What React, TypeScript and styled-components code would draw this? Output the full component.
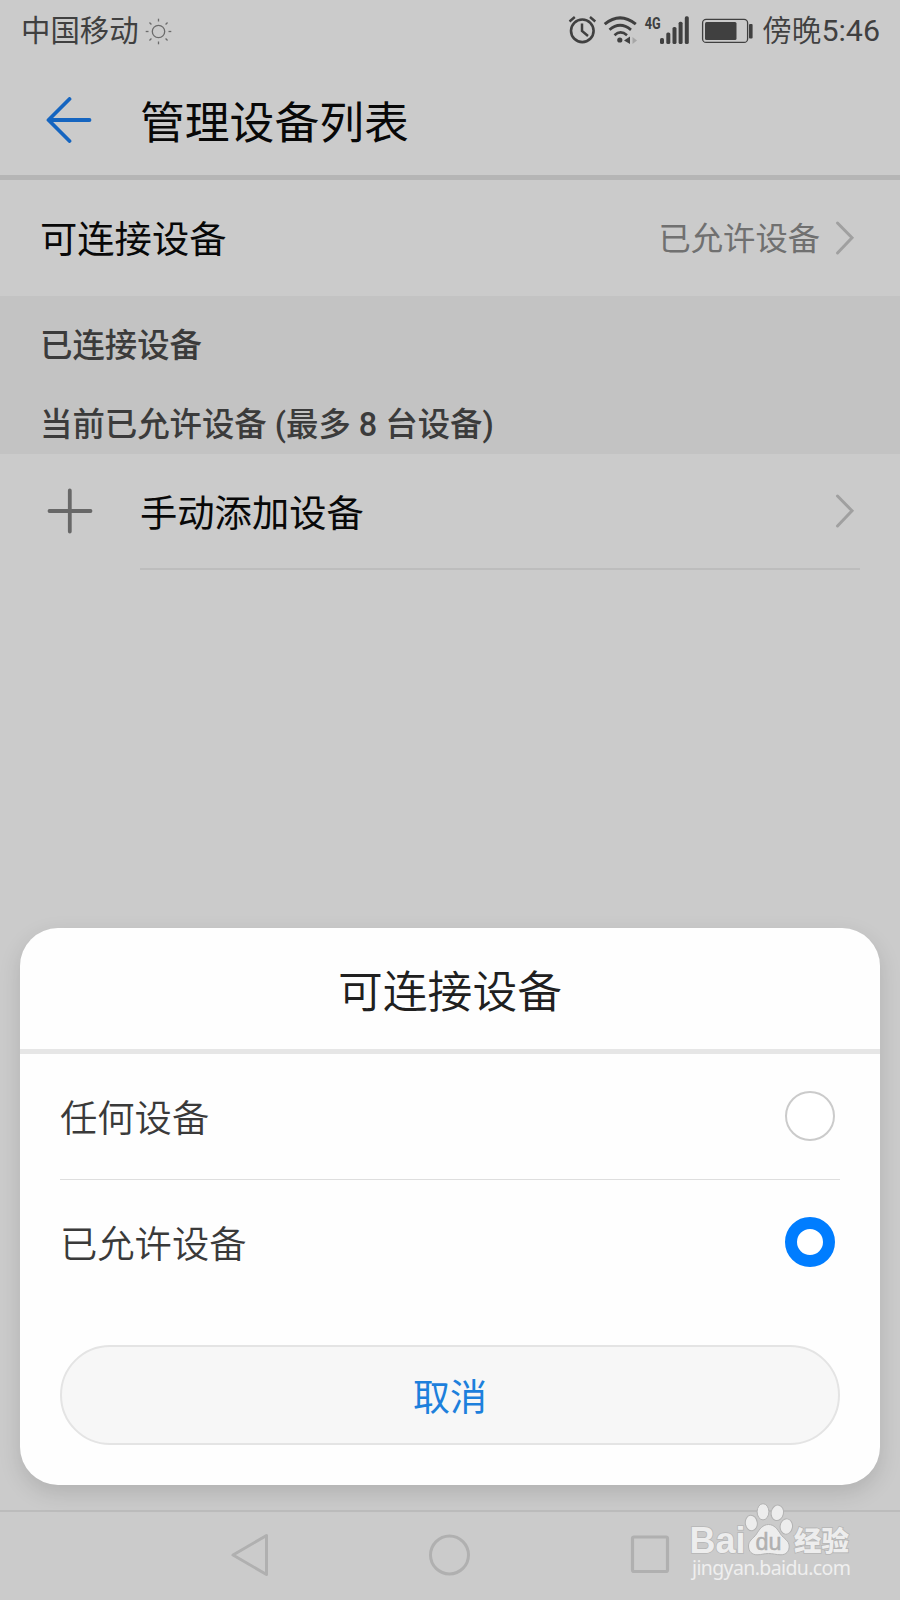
import React, { useState } from "react";
import styled, { createGlobalStyle } from "styled-components";

const GlobalStyle = createGlobalStyle`
  * { box-sizing: border-box; }
  body {
    margin: 0;
    background: #cbcbcb;
    font-family: Roboto, "Noto Sans CJK SC", sans-serif;
  }
  button { font-family: inherit; }
`;

const Screen = styled.div`
  position: relative;
  display: flex;
  flex-direction: column;
  width: 900px;
  height: 1600px;
  overflow: hidden;
  background: #cbcbcb;
  color: #080808;
`;

const StatusBar = styled.div`
  display: flex;
  align-items: center;
  justify-content: space-between;
  height: 62px;
  padding: 0 20px 0 21px;
  color: #404040;
  font-size: 29.4px;
  line-height: 62px;
`;

const StatusGroup = styled.div<{ $gap: number }>`
  display: flex;
  align-items: center;
  gap: ${(p) => p.$gap}px;
`;

const StatusIcon = styled.svg`
  display: block;
  flex: none;
`;

const Clock = styled.span`
  display: flex;
  font-size: 30.4px;
  font-weight: 400;
`;

const ClockPeriod = styled.span`
  font-size: 29.6px;
  font-weight: 350;
`;

const AppBar = styled.header`
  display: flex;
  align-items: center;
  height: 118px;
  padding: 2px 41px 0 46px;
  border-bottom: 5px solid #b5b5b5;
`;

const IconSlot = styled.span<{ $width: number }>`
  display: flex;
  flex: none;
  width: ${(p) => p.$width}px;
`;

const AppTitle = styled.h1`
  margin: 9px 0 0;
  font-size: 44.8px;
  font-weight: 400;
  line-height: 60px;
`;

const ListRow = styled.div<{ $height: number; $labelTop: number }>`
  display: flex;
  align-items: center;
  height: ${(p) => p.$height}px;
  padding: 0 45px 1px 40px;

  > span:not(:first-child),
  > span:only-of-type {
    padding-top: ${(p) => p.$labelTop}px;
  }
`;

const RowLabel = styled.span`
  flex: 1;
  padding-top: 4px;
  font-size: 37.3px;
  line-height: 50px;
`;

const RowValue = styled.span`
  margin-right: 15px;
  color: #707070;
  font-size: 32.3px;
  line-height: 50px;
`;

const Section = styled.div`
  display: flex;
  flex-direction: column;
  height: 158px;
  padding: 3px 0 0 40px;
  background: #c3c3c3;
`;

const SectionTitle = styled.h2<{ $height: number }>`
  margin: 0;
  height: ${(p) => p.$height}px;
  color: #3b3b3b;
  font-size: 32.4px;
  font-weight: 500;
  line-height: ${(p) => p.$height}px;
  white-space: pre;
`;

const InsetLine = styled.div`
  height: 2px;
  margin: 0 40px 0 140px;
  background: #bdbdbd;
`;

const NavBar = styled.nav`
  display: flex;
  align-items: center;
  gap: 159px;
  height: 90px;
  margin-top: auto;
  padding: 0 0 2px 230px;
  border-top: 2px solid #bcbcbc;
`;

const Sheet = styled.section`
  position: absolute;
  top: 928px;
  left: 20px;
  width: 860px;
  height: 557px;
  border-radius: 38px;
  background: #fefefe;
  box-shadow: 0 8px 22px rgba(0, 0, 0, 0.13);
`;

const SheetTitle = styled.h2`
  height: 126px;
  margin: 0;
  padding-top: 3px;
  border-bottom: 5px solid #e6e6e6;
  color: #202020;
  font-size: 44.8px;
  font-weight: 350;
  line-height: 124px;
  text-align: center;
`;

const Options = styled.div`
  display: flex;
  flex-direction: column;
  margin: 0 40px;
`;

const Option = styled.div<{ $divided: boolean }>`
  display: flex;
  align-items: center;
  justify-content: space-between;
  height: 126px;
  padding: 0 5px 2px 0;
  border-bottom: ${(p) => (p.$divided ? "1px solid #dedede" : "0")};
  color: #3a3a3a;
  font-size: 37.3px;
  font-weight: 350;
  cursor: pointer;
`;

const Radio = styled.span<{ $checked: boolean }>`
  width: 50px;
  height: 50px;
  border: ${(p) => (p.$checked ? "12.5px solid #007dff" : "2px solid #cbcbcb")};
  border-radius: 50%;
  background: #fff;
`;

const CancelButton = styled.button`
  display: block;
  width: 780px;
  height: 100px;
  margin: 39px 40px 0;
  padding: 0 0 1px;
  border: 2px solid #e4e4e4;
  border-radius: 50px;
  background: #f7f7f7;
  color: #1d80dc;
  font-size: 37px;
`;

const Watermark = styled.div`
  position: absolute;
  top: 1500px;
  left: 688px;
  width: 168px;
  height: 88px;
`;

const Chevron = () => (
  <svg width="20" height="36" viewBox="0 0 20 36" fill="none" stroke="#a0a0a0" strokeWidth="3">
    <path d="M2.500 3 17 17.800 2.500 33" strokeLinecap="round" />
  </svg>
);

const SunIcon = () => (
  <StatusIcon width="27" height="27" viewBox="-13.5 -13.5 27 27" fill="none" stroke="#6b6b6b" strokeWidth="1.3">
    <circle r="6.2" />
    {[0, 45, 90, 135, 180, 225, 270, 315].map((a) => (
      <path key={a} d="M10 0H12.800" transform={`rotate(${a})`} />
    ))}
  </StatusIcon>
);

const SystemIcons = () => (
  <StatusIcon width="193" height="62" viewBox="565 0 193 62" fill="none" stroke="#404040">
    <circle cx="582.3" cy="30.8" r="11.3" strokeWidth="2.6" />
    <path d="M582 23.500V31L588 36" strokeWidth="2.5" />
    <path d="M569.500 21.500 574.800 17M595.300 21.500 590 17" strokeWidth="2.4" />
    <path d="M604.700 24.200Q620 11.500 635.800 24.200" strokeWidth="3" />
    <path d="M609.500 29.800Q620 20.800 631 29.800" strokeWidth="2.8" />
    <path d="M614.500 35.200Q620.500 29.600 627 35.200" strokeWidth="2.6" />
    <circle cx="619.8" cy="40" r="2.6" fill="#404040" stroke="none" />
    <path d="M630 36.500V44L624 40.500Z" fill="#404040" stroke="none" />
    <path d="M632.500 37V44L637 40.500Z" fill="#a7a7a7" stroke="none" />
    <text x="644.8" y="28.500" fill="#404040" stroke="none" fontFamily="Roboto" fontWeight="700" fontSize="16.500" textLength="16" lengthAdjust="spacingAndGlyphs">4G</text>
    <g fill="#404040" stroke="none">
      <rect x="660" y="38" width="4" height="6" rx="1.6" />
      <rect x="666.3" y="32.5" width="4" height="11.5" rx="1.6" />
      <rect x="672.5" y="27" width="4" height="17" rx="1.6" />
      <rect x="678.6" y="21.7" width="4" height="22.3" rx="1.6" />
      <rect x="684.8" y="16.3" width="4" height="27.7" rx="1.6" />
      <rect x="705" y="22" width="31.5" height="18" rx="1.5" />
      <rect x="749" y="24" width="3.6" height="14.5" rx="1" />
    </g>
    <rect x="702.6" y="19.4" width="45" height="23" rx="3.5" strokeWidth="1.3" />
  </StatusIcon>
);

const BaiduMark = () => (
  <svg width="168" height="88" viewBox="688 1500 168 88">
    <g fill="#ededed" stroke="#b3b3b3" strokeWidth="1">
      <ellipse cx="751.3" cy="1523" rx="6" ry="7.800" transform="rotate(-8 751.3 1523)" />
      <ellipse cx="763" cy="1511.8" rx="5.9" ry="8.1" />
      <ellipse cx="777.3" cy="1512.8" rx="6.2" ry="7.8" transform="rotate(12 777.3 1512.8)" />
      <ellipse cx="786.3" cy="1526.5" rx="6.2" ry="7.7" transform="rotate(8 786.3 1526.5)" />
      <path d="M768.500 1524.500C763 1524.500 759.500 1529 756.500 1534C753 1539 748.500 1540.500 748.500 1546C748.500 1551.500 752 1554.800 757 1554.800C762 1554.800 764 1553.500 768.500 1553.500C773 1553.500 776 1554.800 781 1554.800C786 1554.800 789.300 1551.500 789.200 1546C789 1540.500 784 1539 780.500 1534C777.500 1529 774 1524.500 768.500 1524.500Z" />
    </g>
    <g fill="#ededed" stroke="#b6b6b6" strokeWidth="1.6" paintOrder="stroke">
      <text x="689.500" y="1552.700" fontFamily="'Liberation Sans', sans-serif" fontWeight="700" fontSize="36.500" textLength="56" lengthAdjust="spacingAndGlyphs">Bai</text>
      <text x="794" y="1551.300" fontFamily="'Noto Sans CJK SC', sans-serif" fontWeight="900" fontSize="27.500" textLength="55" lengthAdjust="spacingAndGlyphs">经验</text>
    </g>
    <text x="755.500" y="1549.500" fill="#b0b0b0" stroke="#b0b0b0" strokeWidth="0.5" fontFamily="'Liberation Sans', sans-serif" fontSize="23.500" textLength="26" lengthAdjust="spacingAndGlyphs">du</text>
    <text x="692" y="1574.500" fill="#efefef" fontFamily="'Noto Sans', sans-serif" fontSize="19.500" textLength="159">jingyan.baidu.com</text>
  </svg>
);

const options = ["任何设备", "已允许设备"];

export default function App() {
  const [selected, setSelected] = useState(options[1]);

  return (
    <>
      <GlobalStyle />
      <Screen>
        <StatusBar>
          <StatusGroup $gap={6}>
            <span>中国移动</span>
            <SunIcon />
          </StatusGroup>
          <StatusGroup $gap={4}>
            <SystemIcons />
            <Clock>
              <ClockPeriod>傍晚</ClockPeriod>
              5:46
            </Clock>
          </StatusGroup>
        </StatusBar>

        <AppBar>
          <IconSlot $width={94}>
            <svg width="46" height="46" viewBox="0 0 46 46" fill="none" stroke="#1565c0" strokeWidth="3.8" strokeLinecap="round" strokeLinejoin="round">
              <path d="M23.500 2 2.500 23 23.500 44M3 23H43.500" />
            </svg>
          </IconSlot>
          <AppTitle>管理设备列表</AppTitle>
        </AppBar>

        <ListRow $height={116} $labelTop={2}>
          <RowLabel>可连接设备</RowLabel>
          <RowValue>已允许设备</RowValue>
          <Chevron />
        </ListRow>

        <Section>
          <SectionTitle $height={94}>已连接设备</SectionTitle>
          <SectionTitle $height={64}>当前已允许设备 (最多 8 台设备)</SectionTitle>
        </Section>

        <ListRow $height={114} $labelTop={6}>
          <IconSlot $width={100}>
            <svg width="60" height="46" viewBox="-8 0 60 46" fill="none" stroke="#686868" strokeWidth="3.800" strokeLinecap="round">
              <path d="M1.500 23H42.500M21.800 2.500V43.500" />
            </svg>
          </IconSlot>
          <RowLabel>手动添加设备</RowLabel>
          <Chevron />
        </ListRow>
        <InsetLine />

        <NavBar>
          <svg width="40" height="44" viewBox="0 0 40 44" fill="none" stroke="#b0b0b0" strokeWidth="3" strokeLinejoin="round">
            <path d="M36.500 2.500V41.500L3 22Z" />
          </svg>
          <svg width="42" height="44" viewBox="0 0 42 44" fill="none" stroke="#b0b0b0" strokeWidth="3">
            <circle cx="20.500" cy="22" r="19" />
          </svg>
          <svg width="40" height="44" viewBox="0 0 40 44" fill="none" stroke="#b0b0b0" strokeWidth="3.200">
            <rect x="2.500" y="4" width="35" height="34.500" rx="1.500" />
          </svg>
        </NavBar>

        <Sheet role="dialog">
          <SheetTitle>可连接设备</SheetTitle>
          <Options role="radiogroup">
            {options.map((name, i) => (
              <Option key={name} $divided={i === 0} onClick={() => setSelected(name)}>
                <span>{name}</span>
                <Radio $checked={selected === name} />
              </Option>
            ))}
          </Options>
          <CancelButton type="button">取消</CancelButton>
        </Sheet>

        <Watermark>
          <BaiduMark />
        </Watermark>
      </Screen>
    </>
  );
}
